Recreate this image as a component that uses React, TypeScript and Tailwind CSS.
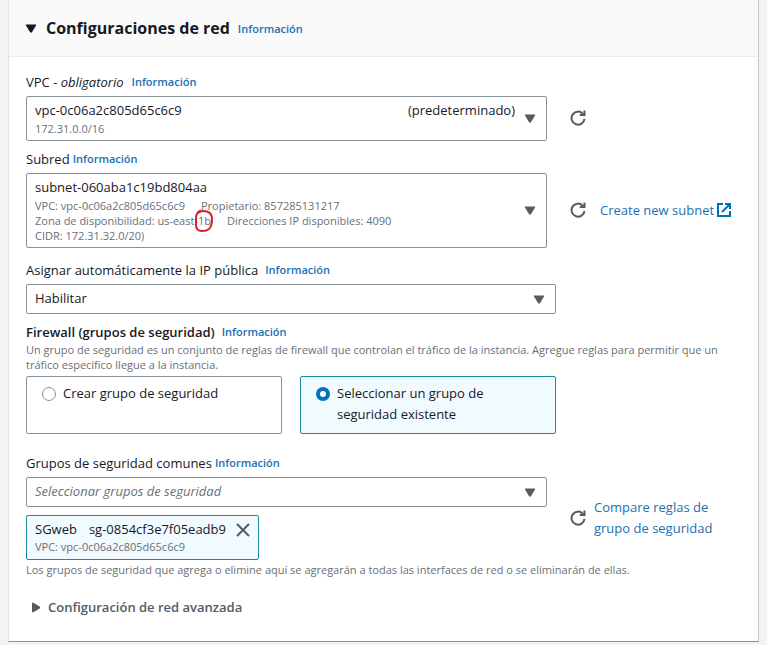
import { useState } from 'react';
import type { ReactNode } from 'react';

function Caret({ className = '' }: { className?: string }) {
  return (
    <svg aria-hidden="true" viewBox="0 0 10 9" className={`h-[9px] w-[10px] shrink-0 fill-[#545b64] ${className}`}>
      <path d="M0 .5h10v1L5.800 8.500H4.200L0 1.500z" />
    </svg>
  );
}

function Info() {
  return (
    <a href="#info" className="text-[11px] leading-5 font-semibold text-[#2070b4]">
      Información
    </a>
  );
}

function RefreshButton({ label }: { label: string }) {
  return (
    <button type="button" aria-label={label} className="shrink-0 pb-0.5">
      <svg
        aria-hidden="true"
        viewBox="0 0 16 16"
        className="size-4 fill-none stroke-[#545b64] stroke-2"
      >
        <path d="M14.500 8.800A6.500 6.500 0 1 1 12.700 3.600L14 5" />
        <path d="M14.500 .5V5H9.800" />
      </svg>
    </button>
  );
}

function FieldRow({ children, aside }: { children: ReactNode; aside?: ReactNode }) {
  return (
    <div className="flex items-center">
      <div className="min-w-0 flex-1">{children}</div>
      <div className="flex w-[193px] shrink-0 items-center pl-[23px]">{aside}</div>
    </div>
  );
}

const trigger =
  'flex w-full items-center rounded-xs border border-[#879196] bg-white px-2 text-left';
const select =
  'h-[30px] w-full appearance-none rounded-xs border border-[#879196] bg-white pr-8 pb-0.5 pl-2 text-[13px]';

function SecurityTile({
  label,
  checked,
  onChange,
}: {
  label: string;
  checked: boolean;
  onChange: () => void;
}) {
  return (
    <label
      className={`flex h-[58px] items-start gap-[7px] rounded-xs border pt-[6px] pr-8 pl-[15px] leading-[21px] ${
        checked ? 'border-[#1b8a9c] bg-[#f1faff]' : 'border-[#879196] bg-white'
      }`}
    >
      <input
        type="radio"
        name="security-group-mode"
        checked={checked}
        onChange={onChange}
        className="mt-1 size-[14px] shrink-0 appearance-none rounded-full border border-[#879196] bg-white checked:border-4 checked:border-[#0073bb]"
      />
      <span>{label}</span>
    </label>
  );
}

export default function App() {
  const [mode, setMode] = useState('existing');

  return (
    <div className="bg-[#f2f3f3] pr-2 pb-1 pl-2 font-['Open_Sans','Noto_Sans',sans-serif] text-[13px] leading-5 text-[#16191f]">
      <section className="border-r border-b border-l border-r-[#c4c8c8] border-b-[#879196] border-l-[#e3e5e5] bg-white">
        <header className="flex h-[57px] items-center border-b border-[#eaeded] bg-[#fafafa] pl-[17px]">
          <button type="button" aria-expanded="true" className="flex items-center gap-[10px]">
            <Caret className="fill-[#16191f]" />
            <h2 className="text-[16px] leading-6 font-bold">Configuraciones de red</h2>
          </button>
          <span className="ml-2">
            <Info />
          </span>
        </header>

        <div className="pr-[18px] pl-[17px] pt-[15px] pb-6">
          <div className="mb-1 flex items-center gap-2">
            <span id="vpc-label">
              VPC - <em>obligatorio</em>
            </span>
            <Info />
          </div>
          <FieldRow aside={<RefreshButton label="Actualizar VPC" />}>
            <button type="button" aria-labelledby="vpc-label" aria-haspopup="listbox" className={`${trigger} h-[45px] pr-[11px]`}>
              <span className="min-w-0 flex-1">
                <span className="mb-0.5 flex justify-between leading-[18px]">
                  <span>vpc-0c06a2c805d65c6c9</span>
                  <span>(predeterminado)</span>
                </span>
                <span className="block text-[11px] leading-[15px] text-[#687078]">172.31.0.0/16</span>
              </span>
              <Caret className="ml-[10px]" />
            </button>
          </FieldRow>

          <div className="mt-2 mb-1 flex items-center gap-[3px]">
            <span id="subnet-label">Subred</span>
            <Info />
          </div>
          <FieldRow
            aside={
              <>
                <RefreshButton label="Actualizar subred" />
                <a href="#subnet" className="ml-[14px] flex items-center gap-[3px] pb-0.5 whitespace-nowrap text-[#2070b4]">
                  Create new subnet
                  <svg aria-hidden="true" viewBox="0 0 14 14" className="size-[14px] fill-none stroke-[#0073bb] stroke-2">
                    <path d="M6 1H1v12h12V8M8 1h5v5M13 1L5 9" />
                  </svg>
                </a>
              </>
            }
          >
            <button type="button" aria-labelledby="subnet-label" aria-haspopup="listbox" className={`${trigger} h-[75px] pr-[11px]`}>
              <span className="min-w-0 flex-1">
                <span className="mb-0.5 block leading-[18px]">subnet-060aba1c19bd804aa</span>
                <span className="block text-[11px] leading-[15px] text-[#687078]">
                  <span className="flex gap-4">
                    <span>VPC: vpc-0c06a2c805d65c6c9</span>
                    <span>Propietario: 857285131217</span>
                  </span>
                  <span className="flex gap-4">
                    <span>
                      Zona de disponibilidad: us-east-
                      <span className="relative">
                        1b
                        <svg
                          aria-hidden="true"
                          viewBox="0 0 20 24"
                          className="absolute -top-1 -left-1 h-6 w-5 fill-none stroke-[#d81f2a] stroke-2"
                        >
                          <path d="M7 1.500C3 3 2 5 2 9v7c0 4 2 6 6 6 6 0 9-2 9.500-7C19 8 18 4 13 2.500 9 1.500 6 2 4 4" />
                        </svg>
                      </span>
                    </span>
                    <span>Direcciones IP disponibles: 4090</span>
                  </span>
                  <span className="block">CIDR: 172.31.32.0/20)</span>
                </span>
              </span>
              <Caret />
            </button>
          </FieldRow>

          <div className="mr-[184px]">
            <div className="mt-3 mb-1 flex items-center gap-[7px]">
              <label htmlFor="public-ip">Asignar automáticamente la IP pública</label>
              <Info />
            </div>
            <div className="grid items-center">
              <select id="public-ip" className={`${select} col-start-1 row-start-1`}>
                <option>Habilitar</option>
                <option>Desactivar</option>
              </select>
              <Caret className="pointer-events-none col-start-1 row-start-1 mr-3 justify-self-end" />
            </div>
          </div>

          <div className="mt-2 flex items-center gap-[7px]">
            <h3 id="firewall" className="font-semibold">Firewall (grupos de seguridad)</h3>
            <Info />
          </div>
          <p className="text-[11px] leading-[15px] text-[#687078]">
            Un grupo de seguridad es un conjunto de reglas de firewall que controlan el tráfico de la instancia. Agregue
            reglas para permitir que un tráfico específico llegue a la instancia.
          </p>
          <div role="radiogroup" aria-labelledby="firewall" className="mt-1 mr-[184px] grid grid-cols-2 gap-[18px]">
            <SecurityTile
              label="Crear grupo de seguridad"
              checked={mode === 'new'}
              onChange={() => setMode('new')}
            />
            <SecurityTile
              label="Seleccionar un grupo de seguridad existente"
              checked={mode === 'existing'}
              onChange={() => setMode('existing')}
            />
          </div>

          <div className="mt-[19px] mb-1 flex items-center gap-[3px]">
            <label htmlFor="groups">Grupos de seguridad comunes</label>
            <Info />
          </div>
          <FieldRow
            aside={
              <>
                <RefreshButton label="Actualizar grupos de seguridad" />
                <a href="#compare" className="ml-2 pb-0.5 leading-[21px] text-[#2070b4]">
                  Compare reglas de grupo de seguridad
                </a>
              </>
            }
          >
            <div className="grid items-center">
              <select id="groups" className={`${select} col-start-1 row-start-1 text-[#687078] italic`}>
                <option>Seleccionar grupos de seguridad</option>
              </select>
              <Caret className="pointer-events-none col-start-1 row-start-1 mr-3 justify-self-end" />
            </div>
            <div className="mt-2 flex h-[45px] w-fit items-start gap-[10px] rounded-xs border border-[#1b8a9c] bg-[#f1faff] py-1 pr-2 pl-2">
              <div>
                <div className="mb-px flex gap-3 leading-[18px]">
                  <span>SGweb</span>
                  <span>sg-0854cf3e7f05eadb9</span>
                </div>
                <div className="text-[11px] leading-[15px] text-[#687078]">VPC: vpc-0c06a2c805d65c6c9</div>
              </div>
              <button type="button" aria-label="Quitar SGweb" className="mt-[3px]">
                <svg aria-hidden="true" viewBox="0 0 14 14" className="size-[14px] fill-none stroke-[#545b64] stroke-2">
                  <path d="M1 1l12 12M13 1L1 13" />
                </svg>
              </button>
            </div>
          </FieldRow>
          <p className="mt-0.5 text-[11px] leading-[15px] text-[#687078]">
            Los grupos de seguridad que agrega o elimine aquí se agregarán a todas las interfaces de red o se eliminarán
            de ellas.
          </p>

          <button type="button" aria-expanded="false" className="mt-5 flex items-center gap-[7px] pl-[5px] font-semibold text-[#545b64]">
            <Caret className="-rotate-90" />
            Configuración de red avanzada
          </button>
        </div>
      </section>
    </div>
  );
}
